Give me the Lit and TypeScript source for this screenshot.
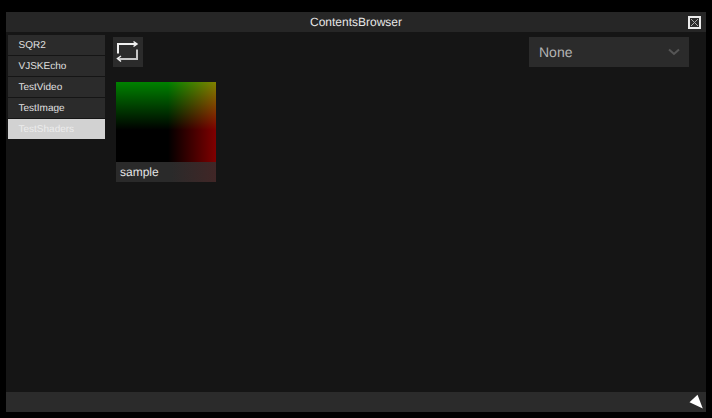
import { LitElement, html, css } from "lit";
import { customElement } from "lit/decorators.js";

const items = ["SQR2", "VJSKEcho", "TestVideo", "TestImage", "TestShaders"];

@customElement("app-root")
export class AppRoot extends LitElement {
  static styles = css`
    :host { display: block; width: 712px; height: 418px; background: #000; font-family: "Liberation Sans", Arial, sans-serif; overflow: hidden; text-rendering: geometricPrecision; }
    .window { box-sizing: border-box; width: 700px; height: 400px; margin: 12px 0 0 6px; background: #151515; display: flex; flex-direction: column; }
    .title { height: 20px; flex: none; background: #262626; color: #e6e6e6; font-size: 12px; display: flex; align-items: center; justify-content: center; position: relative; }
    .close { position: absolute; right: 5px; top: 4px; width: 13px; height: 13px; box-sizing: border-box; border: 2px solid #ececec; background: #2a2a2a; display: block; }
    .close svg { display: block; width: 9px; height: 9px; }
    .body { flex: 1; display: flex; min-height: 0; }
    .side { width: 97px; flex: none; margin: 3px 0 0 2px; display: flex; flex-direction: column; gap: 1px; }
    .item { height: 20px; background: #2b2b2b; color: #e0e0e0; font-size: 10px; line-height: 21px; padding-left: 10.5px; }
    .item.sel { background: #d2d2d2; color: #ececec; }
    .main { flex: 1; padding: 5px 17px 0 8px; display: flex; flex-direction: column; min-width: 0; }
    .top { display: flex; justify-content: space-between; height: 30px; flex: none; }
    .btn { width: 30px; height: 30px; background: #2b2b2b; display: block; }
    .btn svg { display: block; }
    .select { width: 160px; height: 30px; box-sizing: border-box; background: #2b2b2b; color: #b4b4b4; font-size: 14px; padding: 0 9px 0 10px; display: flex; align-items: center; justify-content: space-between; }
    .thumb { width: 100px; height: 100px; margin: 15px 0 0 3px; display: flex; align-items: flex-end;
      background-color: #000;
      background-image:
        linear-gradient(90deg, rgba(128,0,0,0) 52%, rgba(128,0,0,1) 100%),
        linear-gradient(180deg, rgb(0,130,0) 0%, rgb(0,0,0) 48%);
      background-blend-mode: screen; }
    .label { width: 100%; height: 20px; box-sizing: border-box; background: linear-gradient(90deg,#2a2a2a 0%,#2a2a2a 55%,#412626 100%); color: #e4e4e4; font-size: 12px; line-height: 21px; padding-left: 4px; }
    .footer { height: 20px; flex: none; background: #2b2b2b; position: relative; }
    .grip { position: absolute; right: 0; top: 0; width: 20px; height: 20px; display: block; }
  `;

  render() {
    return html`<div class="window">
      <div class="title">ContentsBrowser
        <span class="close"><svg viewBox="0 0 9 9"><path d="M1 1L8 8M8 1L1 8" stroke="#aaa" stroke-width="1" fill="none"/></svg></span>
      </div>
      <div class="body">
        <div class="side">
          ${items.map((t) => html`<div class="item ${t === "TestShaders" ? "sel" : ""}">${t}</div>`)}
        </div>
        <div class="main">
          <div class="top">
            <div class="btn">
              <svg width="30" height="30" viewBox="0 0 30 30" fill="none" stroke="#f0f0f0" stroke-width="2">
                <path d="M5 16.5V7H23.5"/><path d="M20.5 4.5L24 7L20.5 9.5" stroke-width="1.5"/>
                <path d="M24 12.5V22H5" stroke="#c8c8c8"/><path d="M8 19L4.5 21.5L8 24.5" stroke-width="1.5"/>
              </svg>
            </div>
            <div class="select"><span>None</span>
              <svg width="12" height="8" viewBox="0 0 12 8" fill="none" stroke="#565656" stroke-width="2"><path d="M1 1.5L6 6L11 1.5"/></svg>
            </div>
          </div>
          <div class="thumb"><div class="label">sample</div></div>
        </div>
      </div>
      <div class="footer">
        <svg class="grip" viewBox="0 0 20 20"><path d="M11.5 2.8L3.5 10.3L16.8 16.4Z" fill="#fff"/></svg>
      </div>
    </div>`;
  }
}
